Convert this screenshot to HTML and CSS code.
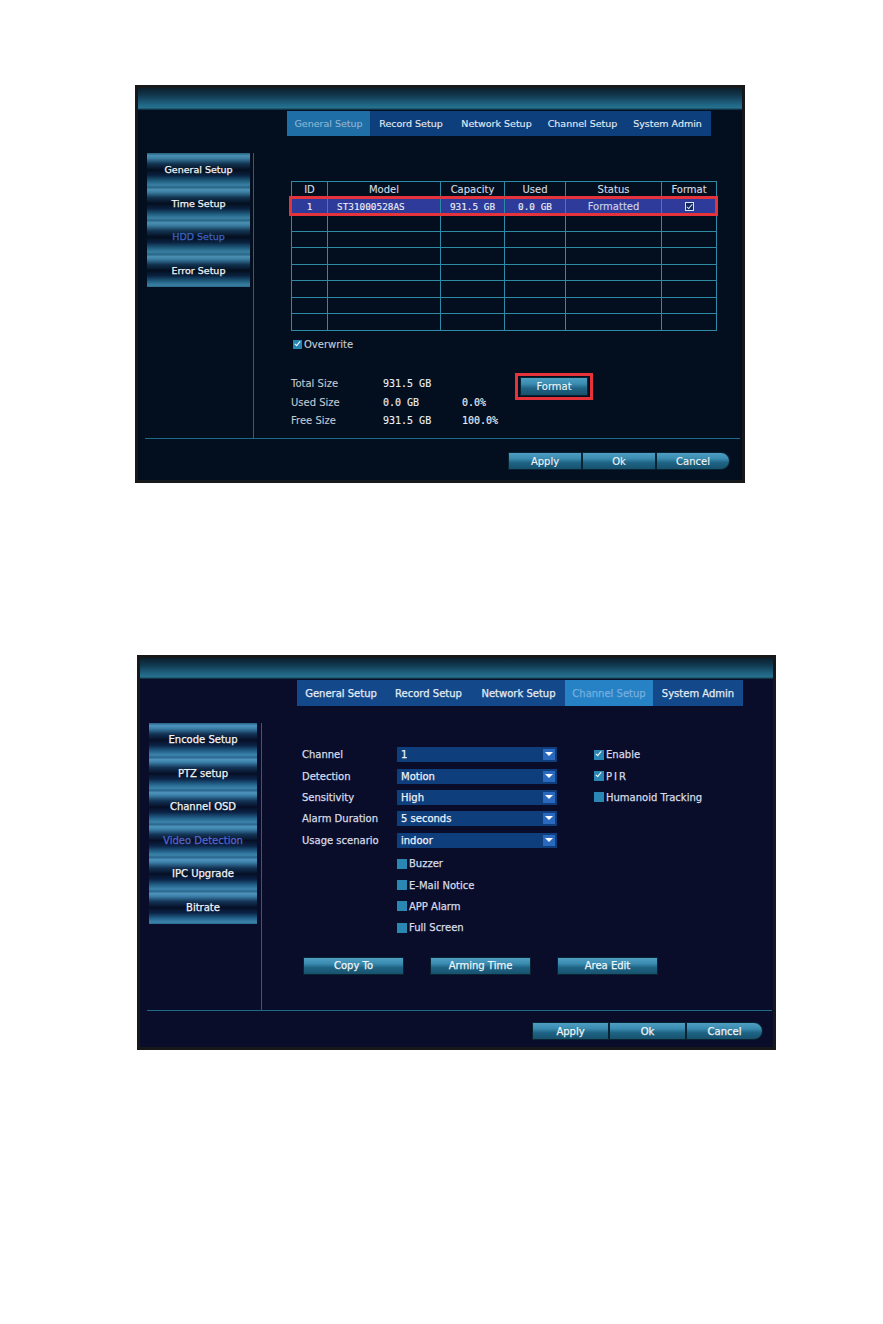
FILE: index.html
```html
<!DOCTYPE html>
<html lang="en">
<head>
    <meta charset="UTF-8">
    <meta name="viewport" content="width=device-width, initial-scale=1.0">
    <title>DVR Setup</title>
    <link rel="stylesheet" href="styles.css">
</head>
<body>

<div class="page">

    <!-- HDD setup screen -->
    <section class="dvr dvr-hdd">
        <div class="dvr-head"></div>
        <nav class="tabs">
            <span class="tab active">General Setup</span>
            <span class="tab">Record Setup</span>
            <span class="tab">Network Setup</span>
            <span class="tab">Channel Setup</span>
            <span class="tab">System Admin</span>
        </nav>
        <div class="dvr-body">
            <ul class="side">
                <li>General Setup</li>
                <li>Time Setup</li>
                <li class="current">HDD Setup</li>
                <li>Error Setup</li>
            </ul>
            <div class="content">
                <div class="disk-table">
                    <table>
                        <tr>
                            <th class="c-id">ID</th>
                            <th class="c-model">Model</th>
                            <th class="c-cap">Capacity</th>
                            <th class="c-used">Used</th>
                            <th class="c-status">Status</th>
                            <th class="c-format">Format</th>
                        </tr>
                        <tr class="selected">
                            <td class="num">1</td>
                            <td class="num left">ST31000528AS</td>
                            <td class="num">931.5 GB</td>
                            <td class="num">0.0 GB</td>
                            <td>Formatted</td>
                            <td><span class="cb cb-table on"></span></td>
                        </tr>
                        <tr><td></td><td></td><td></td><td></td><td></td><td></td></tr>
                        <tr><td></td><td></td><td></td><td></td><td></td><td></td></tr>
                        <tr><td></td><td></td><td></td><td></td><td></td><td></td></tr>
                        <tr><td></td><td></td><td></td><td></td><td></td><td></td></tr>
                        <tr><td></td><td></td><td></td><td></td><td></td><td></td></tr>
                        <tr><td></td><td></td><td></td><td></td><td></td><td></td></tr>
                        <tr><td></td><td></td><td></td><td></td><td></td><td></td></tr>
                    </table>
                    <div class="mark mark-row"></div>
                </div>

                <div class="opt overwrite"><span class="cb on"></span>Overwrite</div>

                <div class="sizes">
                    <div class="size-list">
                        <div class="size-row"><span class="size-label">Total Size</span><span class="num">931.5 GB</span><span class="num"></span></div>
                        <div class="size-row"><span class="size-label">Used Size</span><span class="num">0.0 GB</span><span class="num">0.0%</span></div>
                        <div class="size-row"><span class="size-label">Free Size</span><span class="num">931.5 GB</span><span class="num">100.0%</span></div>
                    </div>
                    <div class="mark mark-btn">
                        <button class="btn btn-format">Format</button>
                    </div>
                </div>
            </div>
        </div>
        <div class="dvr-foot">
            <div class="btn-group">
                <button class="btn">Apply</button>
                <button class="btn">Ok</button>
                <button class="btn last">Cancel</button>
            </div>
        </div>
    </section>

    <!-- Video detection screen -->
    <section class="dvr dvr-motion">
        <div class="dvr-head"></div>
        <nav class="tabs">
            <span class="tab">General Setup</span>
            <span class="tab">Record Setup</span>
            <span class="tab">Network Setup</span>
            <span class="tab active">Channel Setup</span>
            <span class="tab">System Admin</span>
        </nav>
        <div class="dvr-body">
            <ul class="side">
                <li>Encode Setup</li>
                <li>PTZ setup</li>
                <li>Channel OSD</li>
                <li class="current">Video Detection</li>
                <li>IPC Upgrade</li>
                <li>Bitrate</li>
            </ul>
            <div class="content">
                <div class="motion-form">
                    <span class="field-label">Channel</span>
                    <span class="select">1<i class="arrow"></i></span>
                    <span class="opt side-opt"><span class="cb on"></span>Enable</span>

                    <span class="field-label">Detection</span>
                    <span class="select">Motion<i class="arrow"></i></span>
                    <span class="opt side-opt pir"><span class="cb on"></span>PIR</span>

                    <span class="field-label">Sensitivity</span>
                    <span class="select">High<i class="arrow"></i></span>
                    <span class="opt side-opt"><span class="cb"></span>Humanoid Tracking</span>

                    <span class="field-label">Alarm Duration</span>
                    <span class="select">5 seconds<i class="arrow"></i></span>

                    <span class="field-label">Usage scenario</span>
                    <span class="select">indoor<i class="arrow"></i></span>
                </div>

                <div class="notify">
                    <div class="opt"><span class="cb"></span>Buzzer</div>
                    <div class="opt"><span class="cb"></span>E-Mail Notice</div>
                    <div class="opt"><span class="cb"></span>APP Alarm</div>
                    <div class="opt"><span class="cb"></span>Full Screen</div>
                </div>

                <div class="actions">
                    <button class="btn">Copy To</button>
                    <button class="btn">Arming Time</button>
                    <button class="btn">Area Edit</button>
                </div>
            </div>
        </div>
        <div class="dvr-foot">
            <div class="btn-group">
                <button class="btn">Apply</button>
                <button class="btn">Ok</button>
                <button class="btn last">Cancel</button>
            </div>
        </div>
    </section>

</div>

</body>
</html>
```

FILE: styles.css
```css
body {
    margin: 0;
    background-color: #ffffff;
    font-family: "DejaVu Sans", Verdana, sans-serif;
}

.page {
    padding-top: 85px;
}

/* ---------- screen frame ---------- */

.dvr {
    box-sizing: border-box;
    display: flex;
    flex-direction: column;
    border: 3px solid #161819;
    background-color: #030e1e;
    color: #dfe6ee;
    font-size: 10px;
    -webkit-text-stroke: 0.12px currentColor;
}

.dvr-hdd {
    width: 610px;
    height: 398px;
    margin-left: 135px;
}

.dvr-motion {
    width: 639px;
    height: 395px;
    margin: 172px 0 0 137px;
    background-color: #090d29;
    -webkit-text-stroke: 0.25px currentColor;
}

.dvr-head {
    height: 22px;
    flex: none;
    background: linear-gradient(#0b1f2c, #123a50 35%, #1f6584 75%, #27728f 90%, #0a2331 100%);
}

.dvr-motion .dvr-head {
    height: 21px;
}

/* ---------- top tabs ---------- */

.tabs {
    display: flex;
    align-self: flex-start;
    flex: none;
    height: 25px;
    margin: 1px 0 0 149px;
    background-color: #0d3f7d;
    font-size: 9.5px;
}

.dvr-motion .tabs {
    height: 26px;
    margin-left: 157px;
    background-color: #13488a;
    font-size: 10px;
}

.tab {
    display: flex;
    align-items: center;
    justify-content: center;
    white-space: nowrap;
    color: #e4ecf4;
}

.dvr-hdd .tab:nth-child(1) { width: 83px; }
.dvr-hdd .tab:nth-child(2) { width: 82px; }
.dvr-hdd .tab:nth-child(3) { width: 89px; }
.dvr-hdd .tab:nth-child(4) { width: 83px; }
.dvr-hdd .tab:nth-child(5) { width: 87px; }

.dvr-motion .tab:nth-child(1) { width: 88px; }
.dvr-motion .tab:nth-child(2) { width: 87px; }
.dvr-motion .tab:nth-child(3) { width: 93px; }
.dvr-motion .tab:nth-child(4) { width: 88px; }
.dvr-motion .tab:nth-child(5) { width: 90px; }

.tab.active {
    background-color: #1f6ea6;
    color: #8fb7d4;
}

.dvr-motion .tab.active {
    background-color: #2682c4;
    color: #74afe0;
}

/* ---------- body: side menu + content ---------- */

.dvr-body {
    flex: 1;
    display: flex;
    padding-top: 17px;
}

.side {
    list-style: none;
    margin: 0 3px 0 0;
    padding: 0 0 0 9px;
    width: 103px;
    font-size: 9.5px;
}

.dvr-motion .side {
    width: 108px;
    margin-right: 4px;
    font-size: 10px;
}

/* each menu entry is a shaded bar: light band top and bottom, dark middle */
.side li {
    height: 33.5px;
    display: flex;
    align-items: center;
    justify-content: center;
    white-space: nowrap;
    color: #f2f5f8;
    -webkit-text-stroke: 0.25px currentColor;
    background: linear-gradient(#24607f 0%, #4b90b3 8%, #3a7da0 16%, #123350 32%, #040e1f 50%, #0a2240 66%, #1f5d7e 82%, #3a80a3 94%, #2a6a8c 100%);
}

.dvr-motion .side li {
    background: linear-gradient(#265f86 0%, #4d94bd 8%, #3b7fa8 16%, #133456 32%, #060f26 50%, #0b2346 66%, #215f88 82%, #3c84ab 94%, #2b6b93 100%);
}

.side li.current {
    color: #3d63c6;
}

.dvr-motion .side li.current {
    color: #5566cc;
}

.content {
    flex: 1;
    border-left: 1px solid #1b6683;
    padding-left: 37px;
}

.dvr-motion .content {
    padding-left: 40px;
}

/* ---------- disk table ---------- */

.disk-table {
    position: relative;
    width: 425px;
    margin-top: 28px;
}

.disk-table table {
    width: 425px;
    border-collapse: collapse;
    table-layout: fixed;
}

.disk-table th,
.disk-table td {
    height: 15.5px;
    padding: 0;
    border: 1px solid #2c8aa4;
    text-align: center;
    font-weight: normal;
    color: #d4dce4;
    white-space: nowrap;
}

.c-id { width: 35px; }
.c-model { width: 112px; }
.c-cap { width: 63px; }
.c-used { width: 60px; }
.c-status { width: 95px; }
.c-format { width: 54px; }

.disk-table tr.selected td {
    background-color: #2f3b9b;
    color: #d0d6ea;
}

.disk-table td.left {
    text-align: left;
    padding-left: 9px;
}

.num {
    font-family: "DejaVu Sans Mono", "Liberation Mono", monospace;
    font-size: 9.4px;
    color: #eef0f6;
}

.disk-table tr.selected td.num {
    color: #eef0f8;
}

/* red annotation frames */
.mark {
    box-sizing: border-box;
    border: 3px solid #e4333b;
}

.mark-row {
    position: absolute;
    left: -2px;
    top: 15px;
    width: 429px;
    height: 20px;
}

/* ---------- check boxes ---------- */

.opt {
    display: flex;
    align-items: center;
    white-space: nowrap;
}

.cb {
    position: relative;
    flex: none;
    width: 9px;
    height: 9px;
    margin-right: 2px;
    background-color: #2785b6;
}

.cb.on::after {
    content: "";
    position: absolute;
    left: 3px;
    top: 0;
    width: 2px;
    height: 5px;
    border: solid #ffffff;
    border-width: 0 1.5px 1.5px 0;
    transform: rotate(40deg);
}

.cb-table {
    display: inline-block;
    vertical-align: middle;
    box-sizing: border-box;
    border: 1px solid #d7e3ee;
    background-color: #17265e;
    margin: 0;
}

.cb-table.on::after {
    left: 2.5px;
    top: -0.5px;
    border-color: #bfe3f2;
}

.overwrite {
    height: 13px;
    margin: 7px 0 0 2px;
    color: #c6ced8;
}

/* ---------- size summary ---------- */

.sizes {
    display: flex;
    align-items: flex-start;
    margin-top: 24px;
}

.size-list {
    width: 224px;
}

.size-row {
    display: grid;
    grid-template-columns: 92px 79px auto;
    align-items: center;
    height: 18.5px;
    color: #c0c8d2;
}

.size-row .num {
    font-size: 10px;
}

.mark-btn {
    margin-top: -2px;
    padding: 1px 2px;
}

/* ---------- buttons ---------- */

.btn {
    box-sizing: border-box;
    height: 19px;
    padding: 0;
    border: 1px solid #0a2333;
    background: linear-gradient(#4e9fc2, #3a8bb0 35%, #1f6485 60%, #17516d);
    color: #eef4f8;
    font: inherit;
    -webkit-text-stroke: inherit;
}

.btn-format {
    display: block;
    width: 68px;
}

.dvr-foot {
    box-sizing: border-box;
    flex: none;
    height: 42px;
    margin: 0 2px 0 7px;
    padding: 13px 10px 0 0;
    border-top: 1px solid #1d6b89;
    display: flex;
    justify-content: flex-end;
    align-items: flex-start;
}

.dvr-motion .dvr-foot {
    height: 37px;
    margin: 0 1px 0 7px;
    padding: 11px 9px 0 0;
}

.btn-group {
    display: flex;
}

.btn-group .btn {
    width: 74px;
    height: 18px;
}

.dvr-motion .btn-group .btn {
    width: 77px;
    height: 18px;
}

.btn-group .btn.last {
    border-radius: 0 9px 9px 0;
}

/* ---------- video detection form ---------- */

.motion-form {
    display: grid;
    grid-template-columns: 95px 160px auto;
    grid-auto-rows: 21.4px;
    align-items: center;
    padding-top: 21px;
    color: #d6dbe8;
}

.field-label {
    grid-column: 1;
}

.select {
    display: flex;
    align-items: center;
    justify-content: space-between;
    height: 15px;
    padding-left: 4px;
    background-color: #0f3e7c;
    color: #eef1f8;
}

.arrow {
    position: relative;
    width: 12px;
    height: 11px;
    margin-right: 2px;
    background-color: #2a69bd;
}

.arrow::after {
    content: "";
    position: absolute;
    left: 2px;
    top: 3px;
    border-style: solid;
    border-width: 4px 4px 0 4px;
    border-color: #ffffff transparent transparent transparent;
}

.side-opt {
    margin-left: 37px;
}

.dvr-motion .cb {
    width: 10px;
    height: 10px;
    background-color: #2a86b2;
}

.pir {
    letter-spacing: 2px;
}

.notify {
    margin: 2px 0 0 95px;
    color: #d6dbe8;
}

.notify .opt {
    height: 21.4px;
}

.actions {
    display: flex;
    gap: 26px;
    margin: 18px 0 0 1px;
}

.actions .btn {
    width: 101px;
    height: 18px;
}
```
